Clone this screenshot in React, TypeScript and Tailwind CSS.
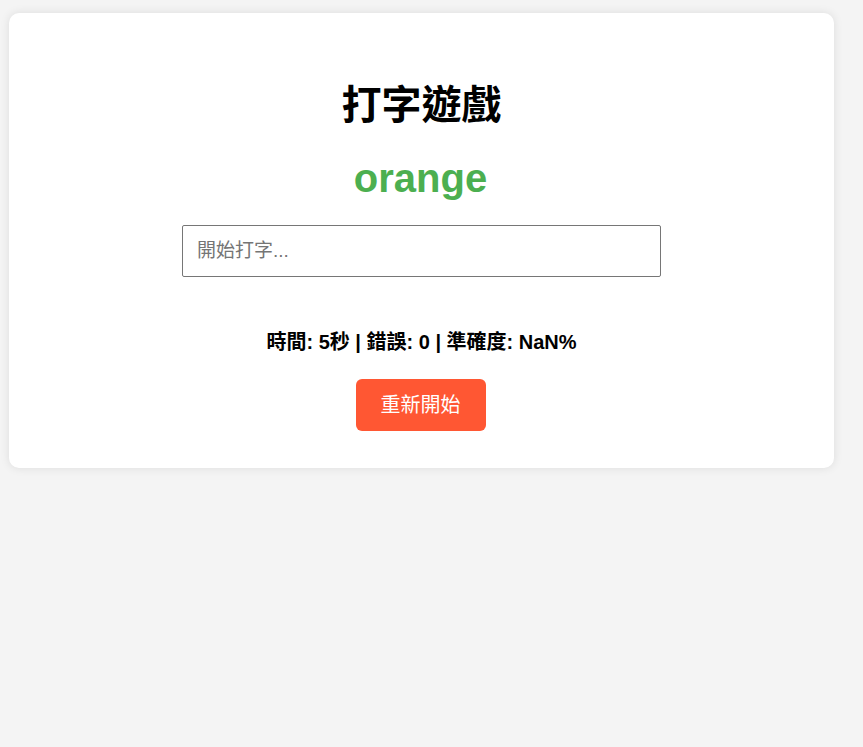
import React from "react";

export default function App() {
  return (
    <div
      className="min-h-[747px] w-full bg-[#f4f4f4] pt-[13px] pl-[9px]"
      style={{ fontFamily: '"Liberation Sans", "Noto Sans CJK TC", sans-serif' }}
    >
      <div className="flex w-[825px] flex-col items-center rounded-[10px] bg-white pt-[68px] pb-[37px] shadow-[0_0_10px_rgba(0,0,0,0.1)]">
        <h1 className="text-[40px] leading-[48px] font-bold text-black">打字遊戲</h1>
        <div className="mt-[25px] mr-[2px] text-[40px] leading-[48px] font-bold text-[#4caf50]">orange</div>
        <input
          className="mt-[23px] h-[52px] w-[479px] rounded-[2px] border border-[#767676] px-[14px] text-[19px] text-black outline-none placeholder:text-[#757575]"
          placeholder="開始打字..."
        />
        <div className="mt-[53px] text-[20px] leading-[24px] font-bold text-black">
          時間: 5秒 | 錯誤: 0 | 準確度: NaN%
        </div>
        <button className="mt-[25px] mr-[2px] flex h-[52px] w-[130px] items-center justify-center rounded-[6px] bg-[#ff5733] text-[20px] text-white">
          重新開始
        </button>
      </div>
    </div>
  );
}
